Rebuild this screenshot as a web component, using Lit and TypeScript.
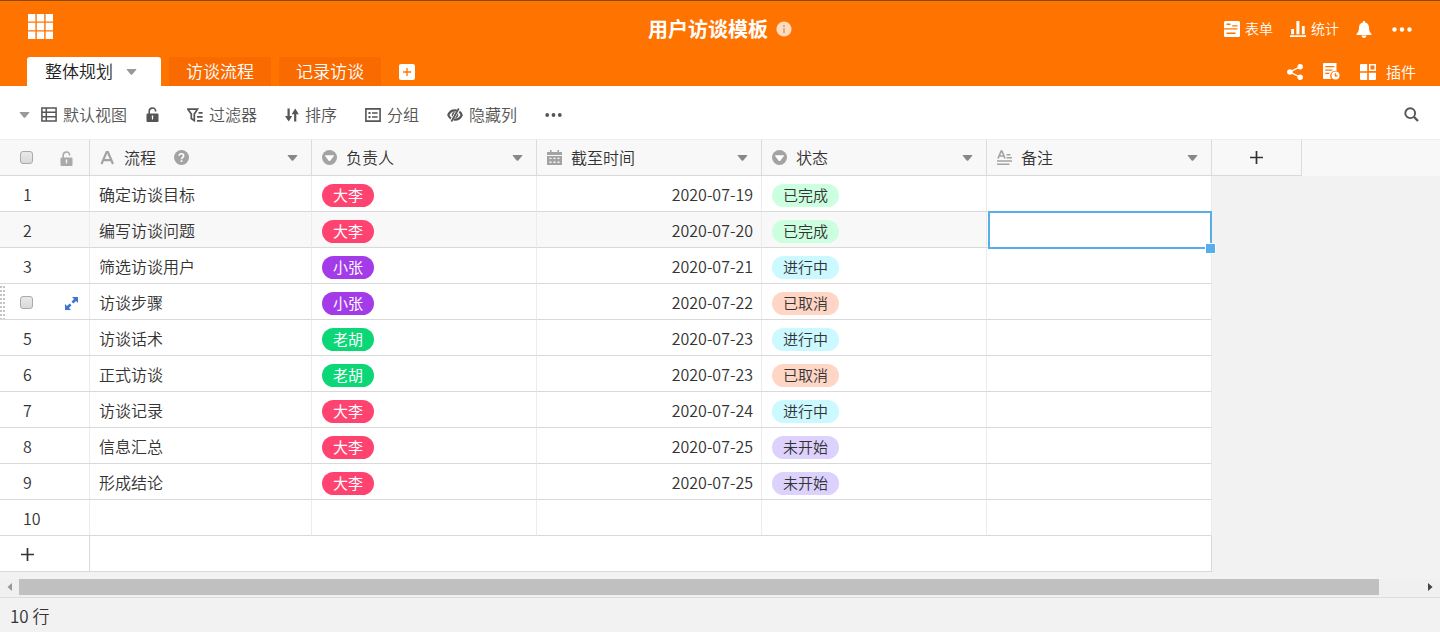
import { LitElement, html, css, svg, nothing } from "lit";
import { customElement, property, state } from "lit/decorators.js";
import { classMap } from "lit/directives/class-map.js";

interface Row {
  name: string;
  owner: string;
  due: string;
  status: string;
}

const ROWS: Row[] = [
  { name: "确定访谈目标", owner: "大李", due: "2020-07-19", status: "已完成" },
  { name: "编写访谈问题", owner: "大李", due: "2020-07-20", status: "已完成" },
  { name: "筛选访谈用户", owner: "小张", due: "2020-07-21", status: "进行中" },
  { name: "访谈步骤", owner: "小张", due: "2020-07-22", status: "已取消" },
  { name: "访谈话术", owner: "老胡", due: "2020-07-23", status: "进行中" },
  { name: "正式访谈", owner: "老胡", due: "2020-07-23", status: "已取消" },
  { name: "访谈记录", owner: "大李", due: "2020-07-24", status: "进行中" },
  { name: "信息汇总", owner: "大李", due: "2020-07-25", status: "未开始" },
  { name: "形成结论", owner: "大李", due: "2020-07-25", status: "未开始" },
  { name: "", owner: "", due: "", status: "" },
];

const COLUMNS = [
  { label: "流程", icon: "text", help: true },
  { label: "负责人", icon: "select", help: false },
  { label: "截至时间", icon: "date", help: false },
  { label: "状态", icon: "select", help: false },
  { label: "备注", icon: "long", help: false },
];

const TONES: Record<string, string> = {
  大李: "red",
  小张: "purple",
  老胡: "green",
  已完成: "done",
  进行中: "doing",
  已取消: "cancelled",
  未开始: "pending",
};

// Each entry: width, height, drawing.
const ICONS: Record<string, [number, number, unknown]> = {
  apps: [25, 25, svg`<path fill="currentColor" d="M0 0h7.4v7.4H0zM8.8 0h7.4v7.4H8.8zM17.6 0H25v7.4h-7.4zM0 8.8h7.4v7.4H0zM8.8 8.8h7.4v7.4H8.8zM17.6 8.8H25v7.4h-7.4zM0 17.6h7.4V25H0zM8.8 17.6h7.4V25H8.8zM17.6 17.6H25V25h-7.4z"/>`],
  info: [16, 16, svg`<circle cx="8" cy="8" r="7.6" fill="#ffdcbf"/><path fill="#e9a874" d="M7 7h2v5H7zM7 4h2v2H7z"/>`],
  form: [16, 16, svg`<path fill="currentColor" fill-rule="evenodd" d="M1.5 0h13A1.5 1.5 0 0 1 16 1.500v13a1.500 1.500 0 0 1-1.500 1.500h-13A1.500 1.500 0 0 1 0 14.500v-13A1.500 1.500 0 0 1 1.500 0zM2.500 2.500v1.600h4V2.500zM8.200 4.200v1.400h5.300V4.200zM0 7.200v1.400h13.500V7.200zM2.500 11.400V13h9v-1.600z"/>`],
  chart: [16, 16, svg`<path fill="currentColor" d="M0 14.300h16V16H0zM1.200 8h2.800v5.300H1.200zM6.400 0h3v13.300h-3zM11.900 5h2.800v8.300h-2.800z"/>`],
  bell: [16, 17, svg`<path fill="currentColor" d="M8 0c.8 0 1.300.6 1.300 1.400C11.800 2 13 4 13 6.600c0 3 .7 4.600 2.400 6.200v1.200H.6v-1.200C2.300 11.200 3 9.600 3 6.600 3 4 4.200 2 6.700 1.400 6.700.6 7.200 0 8 0zM5.500 14.600h5C10.300 16 9.300 16.900 8 16.900S5.700 16 5.500 14.600z"/>`],
  moreBig: [20, 5, svg`<g fill="currentColor"><circle cx="2.500" cy="2.500" r="2.200"/><circle cx="10" cy="2.500" r="2.200"/><circle cx="17.500" cy="2.500" r="2.200"/></g>`],
  share: [16, 16, svg`<path d="M13 2.800 3 8l10 5.200" fill="none" stroke="currentColor" stroke-width="1.400"/><g fill="currentColor"><circle cx="13.200" cy="2.800" r="2.700"/><circle cx="2.900" cy="8" r="2.800"/><circle cx="13.200" cy="13.200" r="2.700"/></g>`],
  history: [17, 17, svg`<path fill="currentColor" fill-rule="evenodd" d="M1 0h12.500v8A5 5 0 0 0 8 15.500l.4.500H1a1 1 0 0 1-1-1V1a1 1 0 0 1 1-1zM2.300 3v1.300h9V3zM2.300 6.400v1.300h7V6.400zM2.300 9.800v1.300h4V9.800z"/><circle cx="12.500" cy="12.500" r="4" fill="currentColor"/><path d="M12.300 10.200v2.600h2.300" fill="none" stroke="#ff7300" stroke-width="1.200"/>`],
  plugin: [16, 16, svg`<path fill="currentColor" d="M1 0h6.200v7.200H0V1a1 1 0 0 1 1-1zM0 8.800h7.200V16H1a1 1 0 0 1-1-1zM8.800 8.800H16V15a1 1 0 0 1-1 1H8.800z"/><path fill="none" stroke="currentColor" stroke-width="1.500" d="M9.700.8h5.500v5.500H9.700z"/>`],
  addTab: [16, 16, svg`<rect width="16" height="16" rx="2" fill="#fff"/><path d="M8 4v8M4 8h8" stroke="#ff7300" stroke-width="1.300"/>`],
  caret: [11, 6, svg`<path fill="currentColor" d="M1.200 0h8.600q1 0 .4.800L6.300 5.400q-.8.800-1.600 0L.8.800Q.2 0 1.200 0z"/>`],
  grid: [16, 15, svg`<path fill="none" stroke="currentColor" stroke-width="1.500" d="M.9.900h14.200v13.200H.9zM.9 5.200h14.200M.9 9.700h14.200M5.300.9v13.200"/>`],
  unlock: [13, 15, svg`<path fill="none" stroke="currentColor" stroke-width="1.600" d="M3.200 7V4.300a3.300 3.300 0 0 1 6.300-1.300v1.600"/><path fill="currentColor" fill-rule="evenodd" d="M1.500 6.400h10a1 1 0 0 1 1 1V14a1 1 0 0 1-1 1h-10a1 1 0 0 1-1-1V7.400a1 1 0 0 1 1-1zM5.800 8.600v1.300l.2 2.600h1l.2-2.600V8.600z"/>`],
  filter: [16, 14, svg`<path fill="none" stroke="currentColor" stroke-width="1.700" d="M.9 1.200h9.600L7.300 6v6.600L4.300 10.500V6z"/><path stroke="currentColor" stroke-width="1.700" d="M11.500 4.800H15.600M10 8.800H15.600M10 12.800H15.600"/>`],
  sort: [14, 14, svg`<path fill="none" stroke="currentColor" stroke-width="2.200" d="M3.600.5v11M10.200 13.500V3"/><path fill="currentColor" d="M0 8h7.200L3.700 13.600zM6.700 6.200 10.200.5 13.800 6.200z"/>`],
  group: [16, 14, svg`<path fill="none" stroke="currentColor" stroke-width="1.600" d="M.9.900h14.200v12.200H.9z"/><path fill="currentColor" d="M3.500 4h2v2h-2zM3.500 8h2v2h-2zM7 4.200h5.600v1.600H7zM7 8.200h5.600v1.600H7z"/>`],
  hide: [16, 14, svg`<path fill="none" stroke="currentColor" stroke-width="2.200" d="M9.800 2.500C5.200 1.800 2.300 4.500 1.300 7c.5 1.400 1.400 2.600 2.600 3.500M12.300 3.600C13.500 4.400 14.200 5.600 14.700 7c-1.300 3-4.200 5-8.200 4.500"/><path fill="none" stroke="currentColor" stroke-width="1.700" d="M11.800.5 4.400 13.500"/><path fill="currentColor" d="M8 3.800 5.200 8.800C4 6.500 5.500 4 8 3.800zM8 10.200l2.900-5c1.200 2.200-.3 4.800-2.900 5z"/>`],
  more: [17, 4, svg`<g fill="currentColor"><circle cx="2.200" cy="2" r="1.900"/><circle cx="8.500" cy="2" r="1.900"/><circle cx="14.800" cy="2" r="1.900"/></g>`],
  search: [15, 15, svg`<circle cx="6.200" cy="6.200" r="4.900" fill="none" stroke="currentColor" stroke-width="1.900"/><path d="m9.800 9.800 4.200 4.200" stroke="currentColor" stroke-width="2.300"/>`],
  text: [15, 15, svg`<path d="M1.500 14 6.600 2h1.300L13 14M3.700 10.200h7" fill="none" stroke="currentColor" stroke-width="2.200"/>`],
  select: [15, 15, svg`<circle cx="7.500" cy="7.500" r="7.500" fill="currentColor"/><path fill="#fff" d="M3.500 5.200h8q.9 0 .4.700L8.300 10.700q-.8.800-1.600 0L3.100 5.900q-.5-.7.400-.7z"/>`],
  date: [15, 15, svg`<path fill="currentColor" fill-rule="evenodd" d="M0 2h3V0h1.600v2h5.800V0H12v2h3v3H0zM0 6h15v9H0zM2.500 7.700v1.400h2V7.700zM6.500 7.700v1.400h2V7.700zM10.500 7.700v1.400h2V7.700zM2.500 11.600V13h2v-1.400zM6.500 11.600V13h2v-1.400zM10.500 11.600V13h2v-1.400z"/>`],
  long: [15, 15, svg`<path d="M1 8.500 4.200 1h.7L8 8.500M2.300 6h4.600" fill="none" stroke="currentColor" stroke-width="1.700"/><path d="M9.500 4.700h4M9.500 7.800h5.500M0 11h15M0 14.200h12.500" stroke="currentColor" stroke-width="1.500"/>`],
  help: [15, 15, svg`<circle cx="7.500" cy="7.500" r="7.500" fill="currentColor"/><path d="M5.200 5.800C5.300 3 9.900 3.200 9.700 5.900 9.600 7.300 7.500 7.400 7.500 9.200" fill="none" stroke="#fff" stroke-width="1.600"/><path fill="#fff" d="M6.600 10.200h1.800v1.700H6.600z"/>`],
  plus: [13, 13, svg`<path d="M6.500 0v13M0 6.500h13" stroke="currentColor" stroke-width="1.700"/>`],
  expand: [13, 13, svg`<path fill="currentColor" d="M7 0H13v6L11 4.100 8.400 6.600 6.500 4.700 9 2zM0 7 2 8.900 4.600 6.400l1.900 1.900L4 11l2 2H0z"/>`],
  left: [5, 8, svg`<path fill="currentColor" d="M5 0v8L.5 4z"/>`],
  right: [5, 8, svg`<path fill="currentColor" d="M0 0v8l4.500-4z"/>`],
};

@customElement("ui-icon")
export class UiIcon extends LitElement {
  @property() name = "";

  static styles = css`
    :host {
      display: inline-flex;
      flex: none;
    }
    svg {
      display: block;
    }
  `;

  render() {
    const icon = ICONS[this.name];
    if (!icon) return nothing;
    const [w, h, shape] = icon;
    return html`<svg width=${w} height=${h} viewBox="0 0 ${w} ${h}" aria-hidden="true">${shape}</svg>`;
  }
}

@customElement("app-root")
export class AppRoot extends LitElement {
  @state() private selectedRow = 1;
  @state() private hoveredRow = 3;
  @state() private visibleShare = 97;

  static styles = css`
    :host {
      display: flex;
      flex-direction: column;
      min-height: 100vh;
      background: #f2f2f2;
      color: #333;
      font-family: "Noto Sans", "Noto Sans CJK SC", sans-serif;
      font-size: 16px;
      font-weight: 350;
      line-height: 24px;
    }
    h1,
    td,
    .footer {
      font-family: "Noto Sans CJK SC", "Noto Sans", sans-serif;
    }
    * {
      box-sizing: border-box;
    }
    button {
      display: inline-flex;
      align-items: center;
      padding: 0;
      border: 0;
      background: none;
      color: inherit;
      font: inherit;
      white-space: nowrap;
      cursor: pointer;
    }

    .header {
      display: flex;
      flex-direction: column;
      border-top: 1px solid #8a4a00;
      background: #ff7300;
      color: #fff;
    }
    .titlebar {
      display: grid;
      grid-template-columns: 1fr auto 1fr;
      align-items: center;
      height: 56px;
      padding: 0 28px;
    }
    .home {
      justify-self: start;
      padding-bottom: 6px;
    }
    .title {
      display: flex;
      align-items: center;
      gap: 8px;
    }
    .title h1 {
      margin: 0;
      font-size: 20px;
      font-weight: 700;
      line-height: 28px;
    }
    .actions {
      display: flex;
      align-items: center;
      justify-self: end;
      gap: 17px;
      font-size: 14px;
    }
    .actions button {
      gap: 5px;
    }
    .actions .last {
      padding-left: 3px;
    }
    .tabbar {
      display: flex;
      align-items: center;
      height: 29px;
      padding: 0 24px 0 27px;
      font-size: 17px;
    }
    .tabs {
      display: flex;
      flex: 1;
      align-items: center;
      gap: 8px;
    }
    .tab {
      height: 29px;
      padding: 0 17px;
      border-radius: 3px 3px 0 0;
      background: #f96a00;
    }
    .tab.active {
      gap: 13px;
      padding: 0 24px 0 18px;
      background: #fff;
      color: #222;
    }
    .tab.active ui-icon {
      color: #999;
    }
    .add-tab {
      margin-left: 10px;
    }
    .tools {
      display: flex;
      gap: 20px;
      font-size: 15px;
    }
    .tools button {
      gap: 10px;
    }

    .toolbar {
      display: flex;
      align-items: center;
      height: 53px;
      padding: 4px 21px 0 19px;
      background: #fff;
      color: #555;
    }
    .toolbar .group {
      display: flex;
      flex: 1;
      align-items: center;
      gap: 28px;
    }
    .toolbar .view {
      display: flex;
      align-items: center;
      gap: 19px;
    }
    .toolbar .group > button {
      gap: 6px;
    }
    .toolbar .switch {
      gap: 11px;
    }
    .toolbar .switch .name {
      display: inline-flex;
      align-items: center;
      gap: 6px;
    }
    .toolbar .switch > ui-icon {
      color: #999;
    }

    .sheet {
      flex: 1;
      padding-bottom: 7px;
      overflow: hidden;
    }
    table {
      width: 100%;
      border-collapse: separate;
      border-spacing: 0;
      table-layout: fixed;
    }
    .c-index {
      width: 90px;
    }
    .c-name {
      width: 222px;
    }
    .c-data {
      width: 225px;
    }
    .c-add {
      width: 90px;
    }
    th,
    td {
      height: 36px;
      padding: 0 10px;
      border-right: 1px solid #ececec;
      border-bottom: 1px solid #d9d9d9;
      background: #fff;
      text-align: left;
      font-weight: inherit;
      white-space: nowrap;
    }
    th {
      height: 37px;
      border-top: 1px solid #eee;
      border-right-color: #dcdcdc;
      background: #f8f8f8;
    }
    .void {
      border-right: 0;
      border-bottom: 0;
    }
    td.void {
      background: #f2f2f2;
    }
    td.name {
      padding-left: 9px;
    }
    .index {
      position: relative;
      padding: 0 11px 0 20px;
    }
    th.index {
      padding-right: 16px;
      color: #aaa;
    }
    .pair {
      display: flex;
      align-items: center;
      justify-content: space-between;
      padding-top: 4px;
    }
    th .pair {
      padding-top: 2px;
    }
    .number {
      padding-left: 3px;
    }
    input[type="checkbox"] {
      width: 13px;
      height: 13px;
      margin: 0 0 3px;
      border: 1px solid #aaa;
      border-radius: 3px;
      appearance: none;
      background: linear-gradient(#e9e9e9, #d9d9d9);
    }
    .expand {
      color: #3f74cf;
    }
    .grip {
      position: absolute;
      top: 2px;
      bottom: 0;
      left: 0;
      width: 6px;
      background: radial-gradient(circle at 1px 1px, #c4c4c4 1px, transparent 1px) 0 0 / 3px 4px;
    }
    .head {
      display: flex;
      align-items: center;
      padding-right: 3px;
    }
    .head ui-icon {
      color: #a3a3a3;
    }
    .head .label {
      padding: 0 18px 0 9px;
    }
    .head .open {
      margin-left: auto;
    }
    .head .open ui-icon {
      color: #888;
    }
    .center {
      text-align: center;
    }
    .center button,
    .add-row button {
      padding-top: 4px;
    }
    .date {
      padding-right: 8px;
      text-align: right;
    }
    .current td {
      background: #f8f8f8;
    }
    .current td.void {
      background: #f2f2f2;
    }
    .current td.selected {
      position: relative;
      background: #fff;
    }
    .outline {
      position: absolute;
      inset: -1px -1px -2px 1px;
      border: 2px solid #58aeea;
      background: #fff;
    }
    .outline::after {
      position: absolute;
      right: -6px;
      bottom: -7px;
      width: 9px;
      height: 9px;
      border: 1px solid #fff;
      background: #58aeea;
      content: "";
    }
    .tag {
      display: inline-block;
      padding: 0 11px 1px;
      border-radius: 12px;
      font-size: 15px;
      line-height: 22px;
      vertical-align: middle;
    }
    .red,
    .purple,
    .green {
      color: #fff;
      font-weight: 400;
    }
    .red {
      background: #ff4370;
    }
    .purple {
      background: #a33be9;
    }
    .green {
      background: #0bd777;
    }
    .done {
      background: #ccffdf;
    }
    .doing {
      background: #ccf8ff;
    }
    .cancelled {
      background: #ffd6c6;
    }
    .pending {
      background: #dcd2fd;
    }
    .add-row td {
      border-right-color: #d9d9d9;
    }
    .add-row td.void {
      border-right: 0;
    }
    .add-row .index {
      padding-left: 21px;
    }

    .scrollbar {
      display: flex;
      height: 18px;
      padding-bottom: 2px;
      background: #f0f0f0;
    }
    .scrollbar button {
      justify-content: center;
      width: 19px;
      color: #999;
    }
    .scrollbar .next {
      color: #444;
    }
    .track {
      flex: 1;
    }
    .thumb {
      height: 16px;
      background: #c0c0c0;
    }
    .footer {
      padding: 6px 10px 4px;
      border-top: 1px solid #dcdcdc;
      font-size: 17px;
    }
  `;

  private tag(value: string) {
    return value ? html`<span class="tag ${TONES[value]}">${value}</span>` : nothing;
  }

  private renderHeader() {
    return html`
      <header class="header">
        <div class="titlebar">
          <button class="home" aria-label="首页"><ui-icon name="apps"></ui-icon></button>
          <div class="title">
            <h1>用户访谈模板</h1>
            <ui-icon name="info"></ui-icon>
          </div>
          <div class="actions">
            <button><ui-icon name="form"></ui-icon>表单</button>
            <button><ui-icon name="chart"></ui-icon>统计</button>
            <button aria-label="通知"><ui-icon name="bell"></ui-icon></button>
            <button class="last" aria-label="更多"><ui-icon name="moreBig"></ui-icon></button>
          </div>
        </div>
        <div class="tabbar">
          <nav class="tabs">
            <button class="tab active">整体规划<ui-icon name="caret"></ui-icon></button>
            <button class="tab">访谈流程</button>
            <button class="tab">记录访谈</button>
            <button class="add-tab" aria-label="添加表格"><ui-icon name="addTab"></ui-icon></button>
          </nav>
          <div class="tools">
            <button aria-label="分享"><ui-icon name="share"></ui-icon></button>
            <button aria-label="历史"><ui-icon name="history"></ui-icon></button>
            <button><ui-icon name="plugin"></ui-icon>插件</button>
          </div>
        </div>
      </header>
    `;
  }

  private renderToolbar() {
    return html`
      <div class="toolbar">
        <div class="group">
          <div class="view">
            <button class="switch">
              <ui-icon name="caret"></ui-icon>
              <span class="name"><ui-icon name="grid"></ui-icon>默认视图</span>
            </button>
            <button aria-label="锁定视图"><ui-icon name="unlock"></ui-icon></button>
          </div>
          <button><ui-icon name="filter"></ui-icon>过滤器</button>
          <button><ui-icon name="sort"></ui-icon>排序</button>
          <button><ui-icon name="group"></ui-icon>分组</button>
          <button><ui-icon name="hide"></ui-icon>隐藏列</button>
          <button aria-label="更多"><ui-icon name="more"></ui-icon></button>
        </div>
        <button aria-label="搜索"><ui-icon name="search"></ui-icon></button>
      </div>
    `;
  }

  private renderRow(row: Row, i: number) {
    const current = i === this.selectedRow;
    return html`
      <tr class=${classMap({ current })}>
        <td class="index">
          ${i === this.hoveredRow
            ? html`<span class="grip"></span>
                <div class="pair">
                  <input type="checkbox" aria-label="选择此行" />
                  <button class="expand" aria-label="展开行"><ui-icon name="expand"></ui-icon></button>
                </div>`
            : html`<span class="number">${i + 1}</span>`}
        </td>
        <td class="name">${row.name}</td>
        <td>${this.tag(row.owner)}</td>
        <td class="date">${row.due}</td>
        <td>${this.tag(row.status)}</td>
        <td class=${classMap({ selected: current })}>
          ${current ? html`<div class="outline"></div>` : nothing}
        </td>
        <td class="void" colspan="2"></td>
      </tr>
    `;
  }

  render() {
    return html`
      ${this.renderHeader()} ${this.renderToolbar()}
      <main class="sheet">
        <table>
          <colgroup>
            <col class="c-index" />
            <col class="c-name" />
            <col class="c-data" />
            <col class="c-data" />
            <col class="c-data" />
            <col class="c-data" />
            <col class="c-add" />
            <col />
          </colgroup>
          <thead>
            <tr>
              <th class="index">
                <div class="pair">
                  <input type="checkbox" aria-label="全选" />
                  <ui-icon name="unlock"></ui-icon>
                </div>
              </th>
              ${COLUMNS.map(
                (c) => html`<th>
                  <div class="head">
                    <ui-icon name=${c.icon}></ui-icon>
                    <span class="label">${c.label}</span>
                    ${c.help ? html`<ui-icon name="help"></ui-icon>` : nothing}
                    <button class="open" aria-label="列菜单"><ui-icon name="caret"></ui-icon></button>
                  </div>
                </th>`
              )}
              <th class="center">
                <button aria-label="添加列"><ui-icon name="plus"></ui-icon></button>
              </th>
              <th class="void"></th>
            </tr>
          </thead>
          <tbody>
            ${ROWS.map((row, i) => this.renderRow(row, i))}
            <tr class="add-row">
              <td class="index">
                <button aria-label="添加行"><ui-icon name="plus"></ui-icon></button>
              </td>
              <td colspan="5"></td>
              <td class="void" colspan="2"></td>
            </tr>
          </tbody>
        </table>
      </main>
      <div class="scrollbar">
        <button aria-label="向左滚动"><ui-icon name="left"></ui-icon></button>
        <div class="track"><div class="thumb" style="width:${this.visibleShare}%"></div></div>
        <button class="next" aria-label="向右滚动"><ui-icon name="right"></ui-icon></button>
      </div>
      <footer class="footer">${ROWS.length} 行</footer>
    `;
  }
}
